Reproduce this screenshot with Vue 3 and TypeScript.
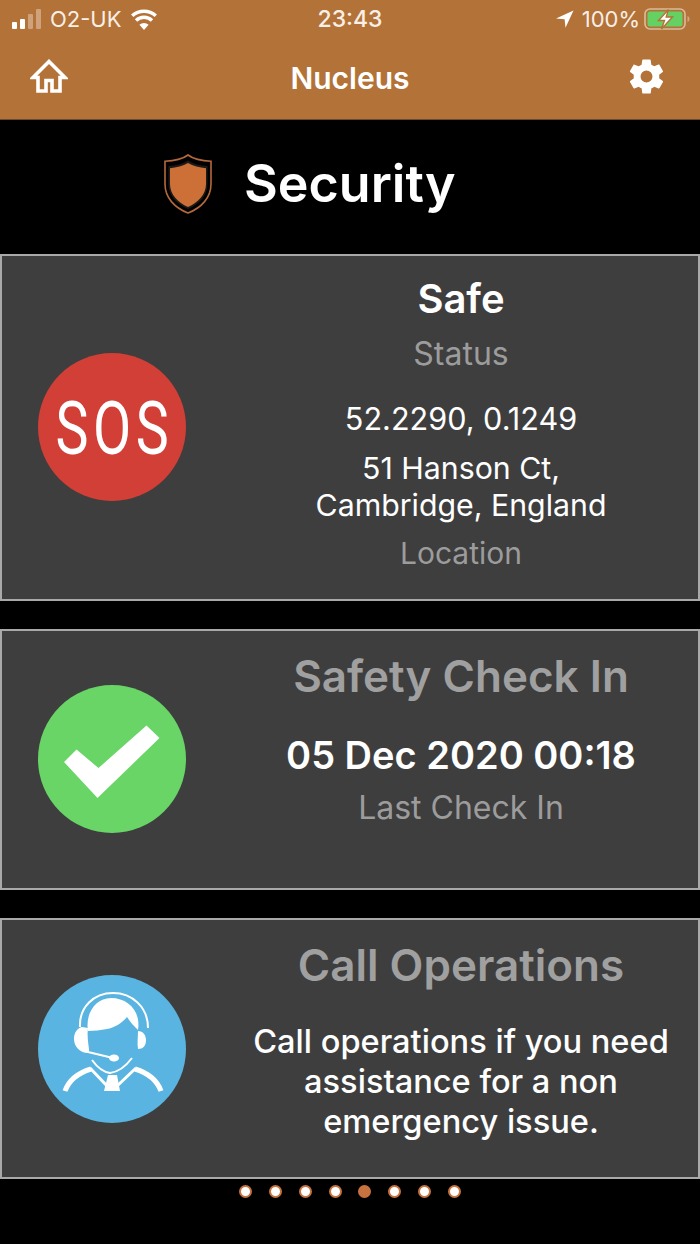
<template>
  <div class="screen">
    <header class="top">
      <div class="status">
        <div class="status-left">
          <span class="bars"><i class="on b1"></i><i class="on b2"></i><i class="b3"></i><i class="b4"></i></span>
          <span class="carrier">O2-UK</span>
          <svg class="wifi" viewBox="0 0 26 21" width="26" height="21">
            <path d="M13 21l-4.600-5.200a6.500 6.500 0 0 1 9.200 0z" fill="#fff" />
            <path d="M5 11.500a11.500 11.500 0 0 1 16 0" fill="none" stroke="#fff" stroke-width="3.400" />
            <path d="M1.200 6.800a17.500 17.500 0 0 1 23.600 0" fill="none" stroke="#fff" stroke-width="3.400" />
          </svg>
        </div>
        <span class="clock">23:43</span>
        <div class="status-right">
          <svg class="arrow" viewBox="0 0 18 18" width="18" height="18"><path d="M17.500 .5L0 8.600l8.600.6.9 8.600z" fill="#fff" /></svg>
          <span class="pct">100%</span>
          <svg class="battery" viewBox="0 0 46 22" width="46" height="22">
            <rect x="1" y="1" width="40" height="20" rx="5" fill="none" stroke="#dcbb9d" stroke-width="1.600" />
            <rect x="3.500" y="3.500" width="35" height="15" rx="2.500" fill="#65d163" />
            <path d="M43.500 8v6c1.400-.5 2-1.600 2-3s-.6-2.500-2-3z" fill="#cfa987" />
            <path d="M24.500 1.500L14.500 12.500h6l-3 8.500 11-12h-6.300z" fill="#fff" stroke="#b37238" stroke-width="1.400" />
          </svg>
        </div>
      </div>
      <nav class="nav">
        <svg class="home" viewBox="0 0 38 34" width="38" height="34">
          <path d="M19 2.500L3 18.500h5V32h8V21.500h6V32h8V18.500h5z" fill="none" stroke="#fff" stroke-width="3.600" stroke-linejoin="miter" />
        </svg>
        <span class="nav-title">Nucleus</span>
        <svg class="gear" viewBox="0 0 24 24" width="41" height="41">
          <path fill="#fff" d="M19.400 13c.04-.32.070-.66.070-1s-.030-.68-.070-1l2.100-1.650c.19-.15.24-.42.120-.64l-2-3.460c-.12-.22-.39-.3-.61-.22l-2.490 1c-.52-.4-1.080-.73-1.690-.98l-.38-2.650A.49.49 0 0 0 14 2h-4c-.25 0-.46.18-.49.42l-.38 2.650c-.61.25-1.170.59-1.690.98l-2.490-1c-.23-.09-.49 0-.61.22l-2 3.460c-.13.22-.07.49.12.64L4.570 11c-.04.32-.07.66-.07 1s.03.68.07 1l-2.110 1.650c-.19.15-.24.42-.12.64l2 3.460c.12.22.39.3.61.22l2.490-1c.52.4 1.080.73 1.690.98l.38 2.650c.03.24.24.42.49.42h4c.25 0 .46-.18.49-.42l.38-2.650c.61-.25 1.170-.59 1.690-.98l2.490 1c.23.09.49 0 .61-.22l2-3.460c.12-.22.07-.49-.12-.64zM12 15.500a3.500 3.500 0 1 1 0-7 3.500 3.500 0 0 1 0 7z" />
        </svg>
      </nav>
    </header>

    <div class="heading">
      <svg class="shield" viewBox="0 0 48 60" width="48" height="60">
        <path d="M24 1c6 4.500 14 6 23 6.200V30c0 14-10 24-23 29C11 54 1 44 1 30V7.200C10 7 18 5.500 24 1z" fill="#000" stroke="#b5693a" stroke-width="1.600" />
        <path d="M24 6.500c5.500 3.500 12 5 19.500 5.500v18c0 11.500-8 20-19.500 25C12.500 50 4.500 41.500 4.500 30V12C12 11.500 18.500 10 24 6.500z" fill="#1c1a18" />
        <path d="M24 9c5 3.100 11.500 4.700 18 5.200V30c0 10.500-8 18.500-18 23C14 48.500 6 40.500 6 30V14.200C12.500 13.700 19 12.100 24 9z" fill="#cd7038" />
      </svg>
      <h1>Security</h1>
    </div>

    <section class="card card-sos">
      <div class="badge red"><span class="sos">SOS</span></div>
      <div class="info">
        <div class="state">Safe</div>
        <div class="label gap-status">Status</div>
        <div class="line coords">52.2290, 0.1249</div>
        <div class="line addr">51 Hanson Ct,<br />Cambridge, England</div>
        <div class="label loc gap-loc">Location</div>
      </div>
    </section>

    <section class="card card-check">
      <div class="badge green">
        <svg viewBox="0 0 148 148" width="148" height="148">
          <path d="M26 77l12.500-12.500 22 18.500 48-42.500 13 12.500-62 60z" fill="#fff" />
        </svg>
      </div>
      <div class="info">
        <div class="title">Safety Check In</div>
        <div class="date">05 Dec 2020 00:18</div>
        <div class="label gap-last">Last Check In</div>
      </div>
    </section>

    <section class="card card-call">
      <div class="badge blue">
        <svg viewBox="0 0 148 148" width="148" height="148">
          <path d="M50 56c-3-18 8-33 23-33 17 0 30 13 27 32-4-4-8-8-11-13-5 6-13 11-20 12-6 1-13 2-19 2z" fill="#fff" />
          <path d="M42 52C41 32 56 18 75 18s35 14 35 35" fill="none" stroke="#fff" stroke-width="2" />
          <path d="M44 52c-5 1-8 6-8 12 0 7 5 13 13 14 2 0 2-2 2-4-1-7-2-14-1-21z" fill="#fff" />
          <path d="M100 56c5 0 8 4 8 9 0 6-3 9-8 9-1-6 0-12 0-18z" fill="#fff" />
          <path d="M50 77l25 6" fill="none" stroke="#fff" stroke-width="2.200" />
          <ellipse cx="76" cy="83" rx="5" ry="3.600" fill="#fff" />
          <path d="M54 85c5 7 11 12 18 13 8-1 16-7 22-15" fill="none" stroke="#fff" stroke-width="2" />
          <path d="M27 116c4-11 13-18 26-22M123 116c-4-11-13-18-26-22" fill="none" stroke="#fff" stroke-width="5" />
          <path d="M52 93l18 19M98 93L78 112" fill="none" stroke="#fff" stroke-width="3" />
          <path d="M70 100h9l3 16H66z" fill="#fff" />
        </svg>
      </div>
      <div class="info">
        <div class="title">Call Operations</div>
        <div class="note">Call operations if you need<br />assistance for a non<br />emergency issue.</div>
      </div>
    </section>

    <div class="dots">
      <span v-for="n in 8" :key="n" class="dot" :class="{ active: n === activePage }"></span>
    </div>
  </div>
</template>

<script setup lang="ts">
import { ref } from 'vue'

const activePage = ref(5)
</script>

<style>
html,
body {
  margin: 0;
  background: #000;
}
</style>

<style scoped>
.screen {
  width: 700px;
  height: 1244px;
  background: #000;
  color: #fff;
  font-family: Inter, "Liberation Sans", sans-serif;
  overflow: hidden;
}

.top {
  height: 119px;
  background: #b37238;
  border-bottom: 1px solid #6e4a2a;
}

.status {
  height: 38px;
  padding: 0 10px 0 12px;
  display: flex;
  align-items: center;
  justify-content: space-between;
  position: relative;
  font-size: 22px;
  color: #f8efe6;
}

.status-left,
.status-right {
  display: flex;
  align-items: center;
}

.bars {
  display: flex;
  align-items: flex-end;
  gap: 3px;
  height: 20px;
}

.bars i {
  width: 5px;
  background: #cfa27c;
  border-radius: 1px;
}

.bars i.on {
  background: #fff;
}

.b1 { height: 7px; }
.b2 { height: 10px; }
.b3 { height: 15px; }
.b4 { height: 20px; }

.carrier {
  margin-left: 9px;
}

.wifi {
  margin-left: 9px;
}

.clock {
  position: absolute;
  left: 0;
  right: 0;
  text-align: center;
  font-size: 23px;
  font-weight: 500;
}

.pct {
  margin-left: 8px;
}

.battery {
  margin-left: 4px;
}

.nav {
  height: 80px;
  padding: 0 33px 0 30px;
  display: flex;
  align-items: center;
  justify-content: space-between;
  position: relative;
}

.nav-title {
  position: absolute;
  left: 0;
  right: 0;
  text-align: center;
  font-size: 30px;
  font-weight: 600;
}

.home {
  margin-top: -4px;
}

.gear {
  margin-top: -4px;
}

.heading {
  height: 134px;
  padding-left: 164px;
  display: flex;
  align-items: center;
  box-sizing: border-box;
}

.heading h1 {
  margin: 0 0 8px 32px;
  font-size: 52px;
  font-weight: 600;
}

.shield {
  margin-bottom: 6px;
}

.card {
  box-sizing: border-box;
  background: #3e3e3e;
  border: 2px solid #a9a9a9;
  display: flex;
  align-items: center;
  padding-left: 36px;
}

.card-sos {
  height: 347px;
  margin-bottom: 28px;
}

.card-check {
  height: 261px;
  margin-bottom: 28px;
}

.card-call {
  height: 261px;
}

.badge {
  flex: none;
  width: 148px;
  height: 148px;
  border-radius: 50%;
  display: flex;
  align-items: center;
  justify-content: center;
}

.card-sos .badge,
.card-check .badge {
  margin-top: -2px;
}

.red { background: #d23f37; }
.green { background: #68d566; }
.blue { background: #5ab4e1; }

.sos {
  display: inline-block;
  font-family: Roboto, "Liberation Sans", sans-serif;
  font-size: 74px;
  font-weight: 400;
  letter-spacing: 6px;
  line-height: 1;
  margin: 4px -6px 0 -1px;
  transform: scaleX(0.75);
}

.info {
  flex: 1;
  margin-left: 38px;
  align-self: flex-start;
  text-align: center;
}

.state {
  margin-top: 21px;
  font-size: 40px;
  line-height: 44px;
  font-weight: 600;
}

.label {
  font-size: 32px;
  line-height: 38px;
  color: #9c9c9c;
}

.label.loc {
  font-size: 30px;
}

.gap-status { margin-top: 14px; }
.gap-loc { margin-top: 10px; }
.gap-last { margin-top: 12px; }

.line {
  font-size: 30.300px;
  line-height: 37px;
}

.coords {
  margin-top: 27px;
  font-size: 30.600px;
}

.addr { margin-top: 13px; }

.title {
  margin-top: 20px;
  font-size: 44px;
  line-height: 50px;
  font-weight: 600;
  color: #a0a0a0;
}

.date {
  margin-top: 32px;
  font-size: 38px;
  line-height: 44px;
  font-weight: 600;
}

.note {
  margin-top: 31px;
  font-size: 32.600px;
  line-height: 40px;
  font-weight: 500;
}

.dots {
  display: flex;
  justify-content: center;
  gap: 16.860px;
  padding-top: 6px;
}

.dot {
  box-sizing: border-box;
  width: 13px;
  height: 13px;
  border-radius: 50%;
  background: #fff;
  border: 2px solid #c8733f;
}

.dot.active {
  background: #c8733f;
}
</style>
